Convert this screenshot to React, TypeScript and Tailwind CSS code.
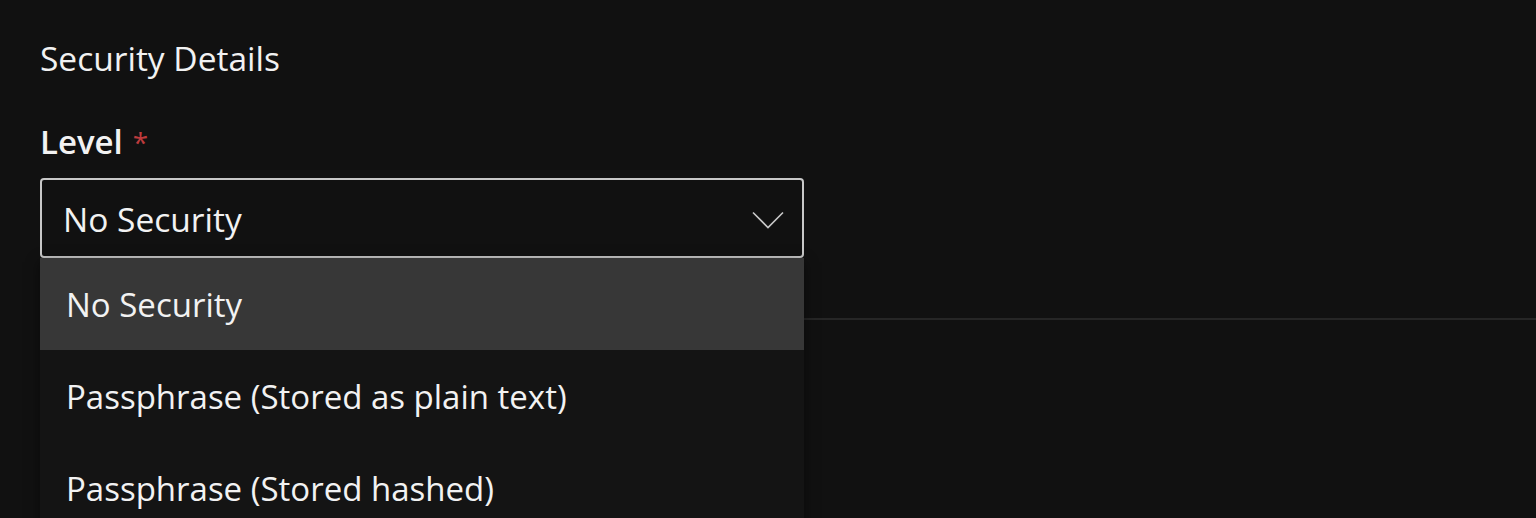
const options = ['No Security', 'Passphrase (Stored as plain text)', 'Passphrase (Stored hashed)'];

function Chevron() {
  return (
    <svg width="32" height="18" viewBox="0 0 32 18" fill="none" className="text-[#c8c8c8] mt-[4px]">
      <polyline points="1,1.5 16,16.5 31,1.5" stroke="currentColor" strokeWidth="1.6" />
    </svg>
  );
}

export default function App() {
  const font = { fontFamily: '"Open Sans", "Noto Sans", sans-serif' };

  return (
    <div className="w-[1536px] h-[518px] bg-[#111111] overflow-hidden text-[#f2f2f2]" style={font}>
      <div className="ml-10 h-[320px] border-b-2 border-[#262626]">
        <h2 className="pt-[36px] text-[33.5px] leading-[44px]">Security Details</h2>
        <div className="mt-[40px] flex items-start h-[44px]">
          <span className="text-[33px] font-semibold leading-[44px]">Level</span>
          <span className="ml-[10px] text-[28px] leading-[44px] text-[#bd3b3d]">*</span>
        </div>
        <div className="relative mt-[14px] w-[764px]">
          <button className="w-full h-[80px] flex items-center justify-between pl-[21px] pr-[18px] border-2 border-[#c8c8c8] rounded-[4px] bg-[#111111]">
            <span className="text-[33.5px] leading-[44px] mt-[1px]">No Security</span>
            <Chevron />
          </button>
          <ul className="absolute left-0 top-[80px] w-[764px] bg-[#141414] shadow-[0_4px_12px_rgba(0,0,0,0.5)]">
            {options.map((opt, i) => (
              <li
                key={opt}
                className={`h-[92px] flex items-center pl-[26px] text-[33px] leading-[44px] ${i === 0 ? 'bg-[#373737]' : ''}`}
              >
                <span className="mt-[2px]">{opt}</span>
              </li>
            ))}
          </ul>
        </div>
      </div>
    </div>
  );
}
